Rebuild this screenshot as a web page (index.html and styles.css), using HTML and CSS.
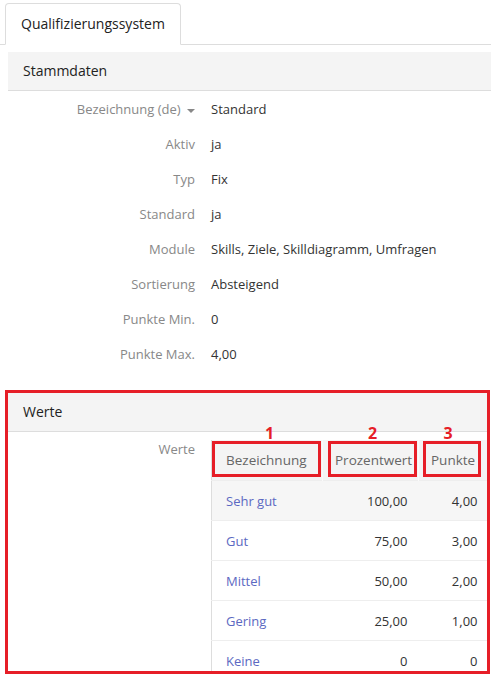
FILE: index.html
```html
<!DOCTYPE html>
<html>
<head>
  <meta charset="UTF-8">
  <title>Qualifizierungssystem</title>
  <link rel="stylesheet" href="styles.css">
</head>
<body>
  <div class="tabs">
    <div class="tab">Qualifizierungssystem</div>
  </div>

  <div class="content">
    <div class="panel">
      <div class="panel-heading">Stammdaten</div>
      <div class="fields">
        <div class="label">Bezeichnung (de) <span class="caret"></span></div>
        <div class="value">Standard</div>
        <div class="label">Aktiv</div>
        <div class="value">ja</div>
        <div class="label">Typ</div>
        <div class="value">Fix</div>
        <div class="label">Standard</div>
        <div class="value">ja</div>
        <div class="label">Module</div>
        <div class="value">Skills, Ziele, Skilldiagramm, Umfragen</div>
        <div class="label">Sortierung</div>
        <div class="value">Absteigend</div>
        <div class="label">Punkte Min.</div>
        <div class="value">0</div>
        <div class="label">Punkte Max.</div>
        <div class="value">4,00</div>
      </div>
    </div>

    <div class="panel panel-marked">
      <div class="panel-heading">Werte</div>
      <div class="werte-row">
        <div class="label label-top">Werte</div>
        <div class="table-wrap">
          <table class="werte">
            <colgroup>
              <col class="col-name">
              <col class="col-pct">
              <col class="col-pts">
            </colgroup>
            <thead>
              <tr>
                <th>Bezeichnung</th>
                <th>Prozentwert</th>
                <th>Punkte</th>
              </tr>
            </thead>
            <tbody>
              <tr class="active">
                <td><a href="#">Sehr gut</a></td>
                <td class="num">100,00</td>
                <td class="num">4,00</td>
              </tr>
              <tr>
                <td><a href="#">Gut</a></td>
                <td class="num">75,00</td>
                <td class="num">3,00</td>
              </tr>
              <tr>
                <td><a href="#">Mittel</a></td>
                <td class="num">50,00</td>
                <td class="num">2,00</td>
              </tr>
              <tr>
                <td><a href="#">Gering</a></td>
                <td class="num">25,00</td>
                <td class="num">1,00</td>
              </tr>
              <tr>
                <td><a href="#">Keine</a></td>
                <td class="num">0</td>
                <td class="num">0</td>
              </tr>
            </tbody>
          </table>
          <div class="mark mark-1"><span>1</span></div>
          <div class="mark mark-2"><span>2</span></div>
          <div class="mark mark-3"><span>3</span></div>
        </div>
      </div>
    </div>
  </div>
</body>
</html>
```

FILE: styles.css
```css
html, body {
  overflow: hidden;
}
body {
  margin: 0;
  font-family: "Open Sans", "Liberation Sans", sans-serif;
  font-size: 13px;
  color: #333;
  background-color: #fff;
}
.tabs {
  display: flex;
  padding: 3px 0 0 5px;
  border-bottom: 1px solid #ddd;
}
.tab {
  margin-bottom: -1px;
  padding: 0 15px;
  line-height: 40px;
  font-size: 14px;
  background-color: #fff;
  border: 1px solid #ddd;
  border-bottom-color: #fff;
  border-radius: 4px 4px 0 0;
  color: #222;
}
.content {
  padding-left: 8px;
}
.panel {
  margin-top: 7px;
}
.panel-heading {
  padding: 0 15px;
  line-height: 38px;
  font-size: 14px;
  color: #222;
  background-color: #f4f4f4;
  border-bottom: 1px solid #ddd;
}
.fields {
  display: grid;
  grid-template-columns: 187px 1fr;
  column-gap: 16px;
  padding-top: 1px;
  line-height: 35px;
}
.label {
  text-align: right;
  color: #888;
}
.value {
  color: #333;
}
.caret {
  display: inline-block;
  margin-left: 3px;
  vertical-align: middle;
  border-top: 4px solid #888;
  border-left: 4px solid transparent;
  border-right: 4px solid transparent;
}
.panel-marked {
  box-sizing: border-box;
  height: 284px;
  overflow: hidden;
  margin: 18px 1px 0 -3px;
  border: 3px solid #e61e27;
}
.werte-row {
  display: grid;
  grid-template-columns: 187px 1fr;
  column-gap: 16px;
  padding-top: 8px;
}
.label-top {
  line-height: 18px;
}
.table-wrap {
  position: relative;
}
table.werte {
  width: 100%;
  border-collapse: collapse;
  border-left: 1px solid #ddd;
  table-layout: fixed;
}
.col-name {
  width: 111px;
}
.col-pct {
  width: 96px;
}
.col-pts {
  width: 69px;
}
th, td {
  height: 39px;
  padding: 0 10px 0 12px;
}
th {
  height: 40px;
  text-align: left;
  font-weight: normal;
  font-size: 13.5px;
  color: #666;
  background-color: #f4f4f4;
  border-right: 1px solid #fafafa;
}
th:first-child, td:first-child {
  padding-left: 14px;
}
td {
  border-top: 1px solid #eee;
}
tr.active td {
  background-color: #f6f6f6;
}
td.num {
  text-align: right;
  padding-right: 11px;
}
td.num:last-child {
  padding-right: 10px;
}
a {
  color: #5c69c2;
  text-decoration: none;
}
.mark {
  position: absolute;
  top: 1px;
  height: 36px;
  box-sizing: border-box;
  border: 3px solid #e61e27;
}
.mark span {
  position: absolute;
  top: -21px;
  left: 0;
  right: 0;
  line-height: 20px;
  text-align: center;
  font-size: 16px;
  font-weight: bold;
  color: #e61e27;
}
.mark-1 {
  left: 1px;
  width: 109px;
}
.mark-1 span {
  left: 6px;
}
.mark-2 {
  left: 117px;
  width: 89px;
}
.mark-3 {
  left: 212px;
  width: 58px;
}
.mark-3 span {
  right: 8px;
}
```
